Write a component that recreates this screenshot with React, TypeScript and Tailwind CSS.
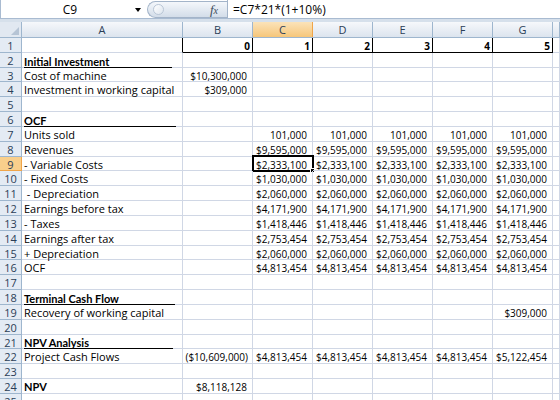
import React from 'react';

type Row = {
  label?: string;
  bold?: boolean;
  line?: string;
  vals?: string[];
};

const cols = ['A', 'B', 'C', 'D', 'E', 'F', 'G', ''];
const widths = ['w-[161px]', 'w-[70px]', 'w-[60px]', 'w-[60px]', 'w-[60px]', 'w-[60px]', 'w-[60px]', 'flex-1'];
const heights = [15, 15, 14, 15, 15, 15, 15, 15, 14, 15, 15, 15, 15, 15, 14, 15, 15, 15, 15, 15, 14, 15, 15, 15, 15];

const same = (v: string) => ['', v, v, v, v, v];

const rows: Row[] = [
  { vals: ['0', '1', '2', '3', '4', '5'] },
  { label: 'Initial Investment', bold: true, line: 'w-[148px]' },
  { label: 'Cost of machine', vals: ['$10,300,000', '', '', '', '', ''] },
  { label: 'Investment in working capital', vals: ['$309,000', '', '', '', '', ''] },
  {},
  { label: 'OCF', bold: true, line: 'w-[152px]' },
  { label: 'Units sold', vals: same('101,000') },
  { label: 'Revenues', vals: same('$9,595,000') },
  { label: '- Variable Costs', vals: same('$2,333,100') },
  { label: '- Fixed Costs', vals: same('$1,030,000') },
  { label: ' - Depreciation', vals: same('$2,060,000') },
  { label: 'Earnings before tax', vals: same('$4,171,900') },
  { label: '- Taxes', vals: same('$1,418,446') },
  { label: 'Earnings after tax', vals: same('$2,753,454') },
  { label: '+ Depreciation', vals: same('$2,060,000') },
  { label: 'OCF', vals: same('$4,813,454') },
  {},
  { label: 'Terminal Cash Flow', bold: true, line: 'w-[151px]' },
  { label: 'Recovery of working capital', vals: ['', '', '', '', '', '$309,000'] },
  {},
  { label: 'NPV Analysis', bold: true, line: 'w-[149px]' },
  {
    label: 'Project Cash Flows',
    vals: ['($10,609,000)', '$4,813,454', '$4,813,454', '$4,813,454', '$4,813,454', '$5,122,454'],
  },
  {},
  { label: 'NPV', bold: true, vals: ['$8,118,128', '', '', '', '', ''] },
  {},
];

const font = { fontFamily: '"Open Sans", sans-serif' };
const boldFont = { fontFamily: 'Lato, "Open Sans", sans-serif' };

function FormulaBar() {
  return (
    <div className="flex h-[19px] border-b border-l border-[#a9bbd1] bg-white">
      <div className="flex w-[146px] items-center pt-[1px]">
        <span className="flex-1 pl-[4px] text-center text-[12px] text-black">C9</span>
        <span className="mr-[6px] h-0 w-0 border-x-[3.5px] border-t-[4px] border-x-transparent border-t-black" />
      </div>
      <div className="mt-[1px] flex h-[17px] w-[80px] items-center rounded-l-full border border-r-0 border-[#a3b4c9] bg-gradient-to-b from-[#f4f7fb] to-[#d3dde9]">
        <span className="ml-[5px] h-[11px] w-[11px] rounded-full border border-[#b9c6d6] bg-gradient-to-br from-white to-[#dde5ee]" />
        <span
          className="ml-auto mr-[9px] text-[13px] italic text-[#3d4b5c]"
          style={{ fontFamily: '"Liberation Serif", serif' }}
        >
          f<span className="text-[10px]">x</span>
        </span>
      </div>
      <div className="flex flex-1 items-center border-l border-[#a3b4c9] pl-[5px] pt-[1px] text-[12px] text-black">
        =C7*21*(1+10%)
      </div>
    </div>
  );
}

function HeaderRow() {
  return (
    <div className="flex h-[16px] border-b border-[#9eb6ce]">
      <div className="relative w-[22px] border-r border-[#9eb6ce] bg-[#e1e8f1]">
        <svg className="absolute bottom-[2px] right-[2px]" width="8" height="8" viewBox="0 0 8 8">
          <polygon points="8,0 8,8 0,8" fill="#b6c4d5" />
        </svg>
      </div>
      {cols.map((c, i) => (
        <div
          key={i}
          className={
            widths[i] +
            ' flex items-center justify-center border-r pt-[2px] text-[11px] ' +
            (c === 'C'
              ? 'border-[#f0a54a] bg-gradient-to-b from-[#fbe3b9] to-[#f6c679] text-[#2b3e57]'
              : 'border-[#9eb6ce] bg-gradient-to-b from-[#f6f8fb] to-[#dce4ee] text-[#2b3e57]')
          }
        >
          {c}
        </div>
      ))}
    </div>
  );
}

function Cell({ i, ci, v }: { i: number; ci: number; v: string }) {
  const first = i === 0;
  let cls = widths[ci + 1] + ' relative flex items-center justify-end border-b border-r pt-[3px] text-[10px] text-black ';
  if (first && ci < 6) cls += 'border-black font-bold pr-[2px] ';
  else cls += 'border-[#d0d7e5] ' + (v.endsWith(')') ? 'pr-[4px] ' : 'pr-[5px] ');
  if (first && ci === 6) cls = widths[ci + 1] + ' border-b border-r border-[#d0d7e5] ';
  return (
    <div className={cls}>
      {v}
      {i === 8 && ci === 1 && (
        <>
          <div className="pointer-events-none absolute -left-[1px] -top-[2px] h-[17px] w-[62px] border-2 border-black" />
          <div className="absolute -bottom-[3px] -right-[3px] h-[5px] w-[5px] border border-white bg-black" />
        </>
      )}
    </div>
  );
}

export default function App() {
  return (
    <div className="h-[400px] w-[560px] overflow-hidden bg-white" style={font}>
      <FormulaBar />
      <div className="h-[3px] bg-[#d6e0eb]" />
      <HeaderRow />
      {rows.map((r, i) => {
        const vals = r.vals ?? ['', '', '', '', '', ''];
        return (
          <div key={i} className={'flex ' + (heights[i] === 14 ? 'h-[14px]' : 'h-[15px]')}>
            <div
              className={
                'flex w-[22px] items-center justify-center border-r border-b pt-[3px] text-[11px] ' +
                (i === 8
                  ? 'border-[#f0a54a] bg-[#f9cf8c] text-[#2b3e57]'
                  : 'border-[#9eb6ce] bg-[#e4ebf4] text-[#2b3e57]')
              }
            >
              {i + 1}
            </div>
            <div
              className={
                'flex w-[161px] items-center border-b border-r pl-[2px] pt-[3px] text-[11px] text-black whitespace-pre ' +
                (i === 0 ? 'border-b-[#d0d7e5] border-r-black' : 'border-[#d0d7e5]') +
                (r.bold ? ' font-bold' : '')
              }
              style={r.bold ? boldFont : undefined}
            >
              {r.line ? (
                <span className={r.line + ' inline-block border-b border-black leading-[11px]'}>{r.label}</span>
              ) : (
                r.label
              )}
            </div>
            {[...vals, ''].map((v, ci) => (
              <Cell key={ci} i={i} ci={ci} v={v} />
            ))}
          </div>
        );
      })}
    </div>
  );
}
